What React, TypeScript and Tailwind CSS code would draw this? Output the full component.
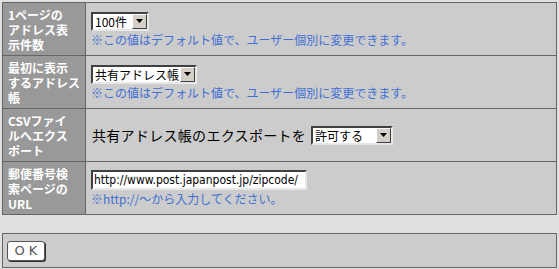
import React from 'react';

const jp = { fontFamily: '"Noto Sans CJK JP", "DejaVu Sans", sans-serif' };

// Win-classic style select box (drawn, not native)
const FakeSelect = ({ label, width }: { label: string; width: string }) => (
  <div
    className={`flex items-center h-[19px] bg-white border-2 border-t-[#404040] border-l-[#404040] border-b-[#e8e8e8] border-r-[#e8e8e8] ${width}`}
  >
    <span className="flex-1 pl-[2px] text-[12px] leading-[15px] text-black whitespace-nowrap">{label}</span>
    <span className="flex items-center justify-center w-[15px] h-[15px] shrink-0 bg-[#d4d0c8] border border-t-white border-l-white border-b-[#404040] border-r-[#404040]">
      <svg width="7" height="4" viewBox="0 0 7 4">
        <polygon points="0,0 7,0 3.5,4" fill="#000" />
      </svg>
    </span>
  </div>
);

const Note = ({ children }: { children: React.ReactNode }) => (
  <div className="mt-[2px] h-[14px] text-[12px] leading-[14px] text-[#3f6fd4] whitespace-nowrap">{children}</div>
);

const rows = [
  { label: ['1ページの', 'アドレス表', '示件数'] },
  { label: ['最初に表示', 'するアドレス', '帳'] },
  { label: ['CSVファイ', 'ルへエクス', 'ポート'] },
  { label: ['郵便番号検', '索ページの', 'URL'] },
];

const Label = ({ lines }: { lines: string[] }) => (
  <div className="w-[83px] shrink-0 bg-[#999999] border-r border-[#666] flex flex-col justify-center pl-[5px]">
    {lines.map((l) => (
      <div key={l} className="h-[15px] text-white font-bold text-[12px] leading-[15px] whitespace-nowrap">{l}</div>
    ))}
  </div>
);

export default function App() {
  return (
    <div className="w-[559px] h-[269px] bg-[#e0e0e0] pt-[2px] pl-[2px]" style={jp}>
      <div className="w-[555px] border border-[#666] bg-[#cccccc]">
        {/* 表示件数 */}
        <div className="flex h-[52px]">
          <Label lines={rows[0].label} />
          <div className="flex-1 flex flex-col justify-center pl-[5px]">
            <FakeSelect label="100件" width="w-[58px]" />
            <Note>※この値はデフォルト値で、ユーザー個別に変更できます。</Note>
          </div>
        </div>

        {/* 最初に表示 */}
        <div className="flex h-[53px] border-t border-[#666]">
          <Label lines={rows[1].label} />
          <div className="flex-1 flex flex-col justify-center pl-[5px]">
            <FakeSelect label="共有アドレス帳" width="w-[106px]" />
            <Note>※この値はデフォルト値で、ユーザー個別に変更できます。</Note>
          </div>
        </div>

        {/* CSV */}
        <div className="flex h-[53px] border-t border-[#666]">
          <Label lines={rows[2].label} />
          <div className="flex-1 flex items-center pl-[6px] gap-[5px]">
            <span className="text-[14px] tracking-[0.3px] text-black whitespace-nowrap">共有アドレス帳のエクスポートを</span>
            <FakeSelect label="許可する" width="w-[82px]" />
          </div>
        </div>

        {/* 郵便番号 */}
        <div className="flex h-[53px] border-t border-[#666]">
          <Label lines={rows[3].label} />
          <div className="flex-1 flex flex-col justify-center pl-[5px]">
            <div className="w-[216px] h-[20px] bg-white border-2 border-t-[#404040] border-l-[#404040] border-b-[#e8e8e8] border-r-[#e8e8e8] flex items-center pl-[1px]">
              <span className="text-[12px] leading-[15px] text-black whitespace-nowrap" style={{ fontFamily: '"DejaVu Sans Condensed", "DejaVu Sans", sans-serif' }}>
                http://www.post.japanpost.jp/zipcode/
              </span>
            </div>
            <Note>※http://～から入力してください。</Note>
          </div>
        </div>
      </div>

      <div className="mt-[18px] w-[555px] h-[35px] border border-[#666] bg-[#cccccc] flex items-center pl-[4px]">
        <button className="w-[38px] h-[20px] bg-white border border-[#555] rounded-[3px] shadow-[1px_1px_0_#333] text-[13px] leading-none text-[#555] tracking-[4px] pl-[4px]" style={{ fontFamily: '"DejaVu Sans", sans-serif' }}>
          OK
        </button>
      </div>
    </div>
  );
}
